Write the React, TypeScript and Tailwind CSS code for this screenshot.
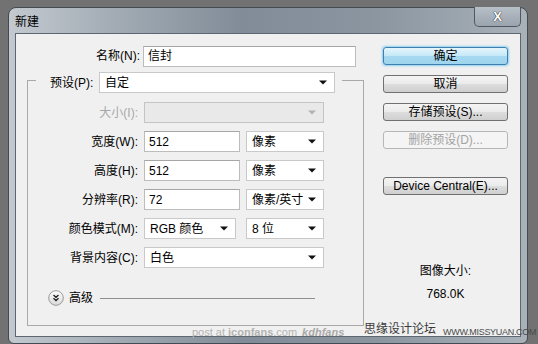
import React from 'react';

const font = "font-['Liberation_Sans','Noto_Sans_CJK_SC',sans-serif]";

const Arrow = ({ disabled = false }: { disabled?: boolean }) => (
  <svg width="8" height="5" viewBox="0 0 8 5">
    <path d="M0 0.5h8L4 4.5z" fill={disabled ? '#b0b0b0' : '#111'} />
  </svg>
);

const Input = ({ value, w }: { value: string; w: string }) => (
  <div className={`${w} h-[21px] bg-white border border-[#bcbcbc] border-t-[#a6a6a6] flex items-center pl-[4px] text-[12px] text-black`}>
    {value}
  </div>
);

const Select = ({ value, w, disabled = false }: { value: string; w: string; disabled?: boolean }) => (
  <div
    className={`${w} h-[21px] border flex items-center justify-between pl-[5px] pr-[7px] text-[12px] ${
      disabled ? 'bg-[#e9e9e9] border-[#c4c4c4]' : 'bg-white border-[#c9c9c9] text-black'
    }`}
  >
    <span>{value}</span>
    <Arrow disabled={disabled} />
  </div>
);

const Row = ({ label, children, disabled = false }: { label: string; children: React.ReactNode; disabled?: boolean }) => (
  <div className="flex items-center h-[21px]">
    <div className={`w-[110px] text-right text-[12px] ${disabled ? 'text-[#a8a8a8]' : 'text-black'}`}>{label}</div>
    <div className="ml-[6px] flex items-center gap-[6px]">{children}</div>
  </div>
);

const Button = ({ children, variant = 'normal' }: { children: React.ReactNode; variant?: 'default' | 'normal' | 'disabled' }) => {
  const styles = {
    default:
      'border-[#3c7fb1] bg-[linear-gradient(180deg,#e5f5fc_0%,#c4e8f8_50%,#a6d9f1_52%,#9fd5ee_100%)] text-black shadow-[0_0_2px_1px_#8fd0f0]',
    normal: 'border-[#707070] bg-[linear-gradient(180deg,#f4f4f4_0%,#ebebeb_50%,#dddddd_52%,#cfcfcf_100%)] text-black',
    disabled: 'border-[#b5b8ba] bg-[#f4f4f4] text-[#a3a3a3]',
  }[variant];
  return (
    <div className={`w-[125px] h-[18px] rounded-[3px] border flex items-center justify-center text-[12px] ${styles}`}>
      {children}
    </div>
  );
};

const AdvancedIcon = () => (
  <svg width="16" height="16" viewBox="0 0 16 16">
    <defs>
      <linearGradient id="adv" x1="0" y1="0" x2="0" y2="1">
        <stop offset="0" stopColor="#ffffff" />
        <stop offset="1" stopColor="#d8d8d8" />
      </linearGradient>
    </defs>
    <circle cx="8" cy="8" r="7.3" fill="url(#adv)" stroke="#9a9a9a" strokeWidth="1" />
    <path d="M5.5 5l2.5 2.3 2.5-2.3M5.5 8.3l2.5 2.3 2.5-2.3" fill="none" stroke="#222" strokeWidth="1.3" />
  </svg>
);

export default function App() {
  return (
    <div className={`relative w-[538px] h-[344px] overflow-hidden bg-[#727272] pt-[7px] ${font}`}>
      <div className="ml-[8px] w-[520px] h-[337px] rounded-t-[8px] rounded-b-[6px] border border-[#434a52] bg-[linear-gradient(90deg,#c3c9cf_0%,#a3acb5_20%,#818c98_45%,#8a95a0_70%,#a9b1b9_100%)] flex flex-col px-[6px] pb-[6px]">
        <div className="h-[25px] flex items-start justify-between">
          <span className="mt-[5px] text-[12px] text-black">新建</span>
          <div className="-mt-[1px] w-[47px] h-[20px] rounded-b-[5px] border border-[#4f5862] border-t-0 bg-[linear-gradient(180deg,#b7bfc7_0%,#9aa4ae_100%)] flex items-center justify-center">
            <span className="text-[13px] font-bold text-white leading-none [text-shadow:0_0_1px_#222,0_0_1px_#222]">X</span>
          </div>
        </div>

        <div className="flex-1 border border-[#5d6771] bg-[#f0f0f0] flex">
          <div className="ml-[11px] w-[337px] pt-[11px]">
            <div className="flex items-center h-[22px]">
              <div className="w-[113px] text-right text-[12px] text-black">名称(N):</div>
              <div className="ml-[3px]">
                <Input value="信封" w="w-[213px]" />
              </div>
            </div>

            <div className="mt-[13px] border border-[#a9a9a9] pb-[18px]">
              <div className="-mt-[9px] ml-[8px] w-[306px] h-[21px] bg-[#f0f0f0] flex items-center pl-[14px]">
                <div className="w-[49px] text-[12px] text-black">预设(P):</div>
                <Select value="自定" w="w-[236px]" />
              </div>

              <div className="mt-[9px] flex flex-col gap-[8px]">
                <Row label="大小(I):" disabled>
                  <Select value="" w="w-[180px]" disabled />
                </Row>
                <Row label="宽度(W):">
                  <Input value="512" w="w-[96px]" />
                  <Select value="像素" w="w-[78px]" />
                </Row>
                <Row label="高度(H):">
                  <Input value="512" w="w-[96px]" />
                  <Select value="像素" w="w-[78px]" />
                </Row>
                <Row label="分辨率(R):">
                  <Input value="72" w="w-[96px]" />
                  <Select value="像素/英寸" w="w-[78px]" />
                </Row>
                <Row label="颜色模式(M):">
                  <Select value="RGB 颜色" w="w-[92px]" />
                  <div className="ml-[4px]">
                    <Select value="8 位" w="w-[78px]" />
                  </div>
                </Row>
                <Row label="背景内容(C):">
                  <Select value="白色" w="w-[180px]" />
                </Row>
              </div>

              <div className="mt-[21px] ml-[20px] flex items-center">
                <AdvancedIcon />
                <span className="ml-[5px] text-[12px] text-black">高级</span>
                <div className="ml-[7px] w-[215px] h-px bg-[#8e8e8e]" />
              </div>
            </div>
          </div>

          <div className="ml-[19px] w-[125px] pt-[13px] flex flex-col">
            <Button variant="default">确定</Button>
            <div className="mt-[10px]">
              <Button>取消</Button>
            </div>
            <div className="mt-[10px]">
              <Button>存储预设(S)...</Button>
            </div>
            <div className="mt-[10px]">
              <Button variant="disabled">删除预设(D)...</Button>
            </div>
            <div className="mt-[28px]">
              <Button>Device Central(E)...</Button>
            </div>
            <div className="mt-[69px] text-center text-[12px] text-black leading-[14px]">图像大小:</div>
            <div className="mt-[9px] text-center text-[12px] text-black leading-[14px]">768.0K</div>
          </div>
        </div>
      </div>

      <div className="absolute left-[192px] top-[327px] flex items-baseline text-[11px] text-[#b3b3b3] leading-none">
        <span>post at </span>
        <span className="ml-[3px] font-bold">iconfans</span>
        <span>.com</span>
        <span className="ml-[5px] font-bold italic text-[#a9a9a9]">kdhfans</span>
      </div>
      <div className="absolute left-[364px] top-[323px] text-[12px] text-[#3a3a3a] leading-none">思缘设计论坛</div>
      <div className="absolute left-[443px] top-[328px] whitespace-nowrap text-[9px] tracking-[-0.3px] text-[#4a4a4a] leading-none font-['Liberation_Sans',sans-serif]">
        WWW.MISSYUAN.COM
      </div>
    </div>
  );
}
